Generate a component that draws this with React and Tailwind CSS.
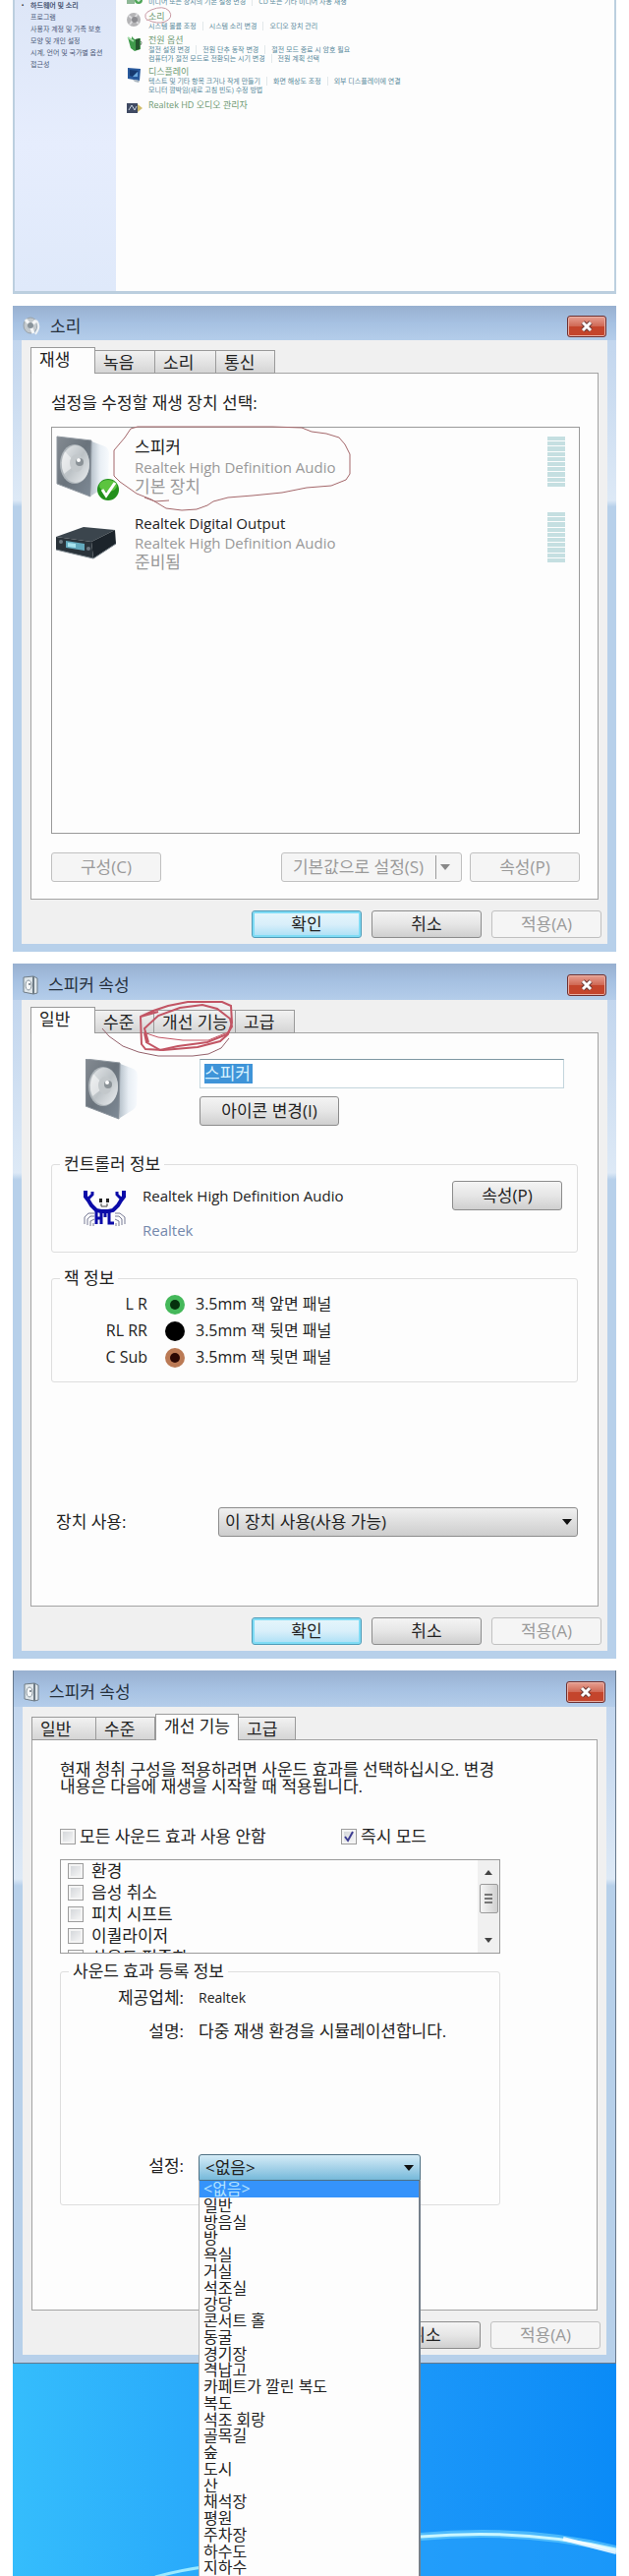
import React, { useState } from 'react';

const presets = [
  '일반', '방음실', '방', '욕실', '거실', '석조실', '강당', '콘서트 홀', '동굴', '경기장', '격납고',
  '카페트가 깔린 복도', '복도', '석조 회랑', '골목길', '숲', '도시', '산', '채석장', '평원', '주차장',
  '하수도', '지하수',
];

const sidebarLinks = [
  '하드웨어 및 소리', '프로그램', '사용자 계정 및 가족 보호', '모양 및 개인 설정',
  '시계, 언어 및 국가별 옵션', '접근성',
];

const Button = ({ children, variant = 'normal', className = '' }) => {
  const styles = {
    normal: 'border-[#8c8c8c] bg-linear-to-b from-[#f4f4f4] via-[#e6e6e6] to-[#cfcfcf] text-[#222]',
    primary:
      'border-[#4f9cb8] bg-linear-to-b from-[#e6f6fb] via-[#d9effa] to-[#a9dff5] text-[#222] shadow-[inset_0_0_0_2px_#7fdcf5]',
    disabled: 'border-[#c0c0c0] bg-[#f5f5f5] text-[#9a9a9a]',
  };
  return (
    <button
      type="button"
      disabled={variant === 'disabled'}
      className={`flex items-center justify-center rounded-[3px] border text-[17px] leading-6 ${styles[variant]} ${className}`}
    >
      {children}
    </button>
  );
};

const SpeakerArt = () => (
  <>
    <path d="M30 3 L46 9 Q53 11 53 17 L52 47 Q51 50 48 52 L35 60 Z" fill="url(#side)" />
    <path d="M0 0 L35 4 L34 61 L0 48 Z" fill="url(#face)" stroke="#8f979f" strokeWidth="1" />
    <ellipse cx="18" cy="28" rx="15" ry="20" fill="#aeb5ba" />
    <ellipse cx="19" cy="28" rx="14" ry="19" fill="url(#cone)" />
    <path d="M20 28 L8 15 A14 19 0 0 0 7 38 Z" fill="#fff" opacity=".5" />
    <ellipse cx="20" cy="27" rx="7" ry="9" fill="#c3c8cb" />
    <circle cx="23" cy="26" r="4" fill="#8b9297" />
    <circle cx="22" cy="24" r="2" fill="#fff" />
    <defs>
      <linearGradient id="side">
        <stop offset="0" stopColor="#9eabb6" />
        <stop offset=".6" stopColor="#e8eef4" />
        <stop offset="1" stopColor="#f7fafd" />
      </linearGradient>
      <linearGradient id="face" x2="1" y2="1">
        <stop offset="0" stopColor="#848b92" />
        <stop offset=".5" stopColor="#6a737c" />
        <stop offset="1" stopColor="#7f8b97" />
      </linearGradient>
      <linearGradient id="cone" x2="1" y2="1">
        <stop offset="0" stopColor="#e6e9eb" />
        <stop offset=".5" stopColor="#bcc2c6" />
        <stop offset="1" stopColor="#eceff1" />
      </linearGradient>
    </defs>
  </>
);

const SpeakerIcon = () => (
  <svg className="h-[62px] w-[54px] shrink-0" viewBox="0 0 54 62">
    <SpeakerArt />
  </svg>
);

const DefaultSpeakerIcon = () => (
  <svg className="h-[62px] w-[62px] shrink-0 overflow-visible" viewBox="0 0 62 62">
    <g transform="translate(1 0)">
      <SpeakerArt />
    </g>
    <circle cx="53" cy="54" r="11" fill="#23901c" />
    <ellipse cx="53" cy="50" rx="9" ry="6" fill="#5cc43f" />
    <path d="M47 54 L51 60 L60 47" fill="none" stroke="#fff" strokeWidth="3" />
  </svg>
);

const ReceiverIcon = () => (
  <svg className="h-[62px] w-[62px] shrink-0" viewBox="0 0 62 62">
    <path d="M0 25 L28 15 L60 18 L36 30 Z" fill="#3b454d" />
    <path d="M36 30 L60 18 L61 32 L38 47 Z" fill="#1c242b" />
    <path d="M0 25 L36 30 L38 47 L0 38 Z" fill="#2a333a" />
    <path d="M10 29 L29 32 L29 39 L10 36 Z" fill="#63a9bd" />
    <path d="M12 31 L20 32 L20 36 L12 35 Z" fill="#a8e3ee" />
    <circle cx="5" cy="30" r="2" fill="#717c84" />
    <circle cx="33" cy="37" r="2" fill="#6d7880" />
    <path d="M0 38 L38 47 L61 32" fill="none" stroke="#7a848b" />
  </svg>
);

const CrabIcon = () => (
  <svg className="h-9 w-[43px] shrink-0" viewBox="0 0 43 36">
    <g fill="none" stroke="#777a95">
      <path d="M11 23 H5 L1 27 V34 M11 26 H7 L4 29 V35 M11 29 L7 31 V36 M10 33 V36" />
      <path d="M32 23 H37 L42 27 V34 M32 26 H36 L39 29 V35 M32 29 L36 31 V36 M33 33 V36" />
    </g>
    <g fill="none" stroke="#0b0ba8">
      <path d="M2 0 V6 L5 10 L8 15 L13 20 L18 21 H25 L30 20 L35 15 L38 10 L41 6 V0" strokeWidth="4" />
      <path d="M9 1 V4 L5 8 M34 1 V4 L38 8" strokeWidth="3" />
      <path d="M13 21 V34 M18 21 V34 M13 28 H18 M22 21 V27 M26 21 V33 H31" strokeWidth="3" />
    </g>
    <path d="M16 8 h3 v4 h-3 Z M23 8 h3 v4 h-3 Z" fill="#222" />
    <path d="M18 13 V16 H24 V13" fill="none" stroke="#444" />
  </svg>
);

const TitleSpeaker = () => (
  <svg className="h-5 w-4 shrink-0" viewBox="0 0 16 20">
    <path d="M1 2 L11 1 L15 3 V18 L11 19 L1 17 Z" fill="#dfe6ea" stroke="#6f7c86" />
    <path d="M11 1 V19" stroke="#6f7c86" strokeWidth="2" />
    <ellipse cx="6" cy="10" rx="3" ry="5" fill="#f6f8f9" stroke="#8d99a2" />
    <circle cx="7" cy="9" r="1" fill="#66727b" />
  </svg>
);

const TitleSound = () => (
  <svg className="h-5 w-[18px] shrink-0" viewBox="0 0 18 20">
    <ellipse cx="8" cy="9" rx="7" ry="8" fill="#c3c9cd" stroke="#98a2aa" />
    <path d="M8 9 L3 3 M8 9 L14 4 M8 9 L11 17" stroke="#f5f7f8" strokeWidth="3" />
    <circle cx="8" cy="9" r="3" fill="#89939a" />
    <path d="M14 4 Q19 10 13 18" fill="none" stroke="#eef1f3" strokeWidth="2" />
  </svg>
);

const Dialog = ({ title, icon, titleClass, frameClass, tabs, scribble, children }) => (
  <section
    className={`border-t bg-linear-to-b from-[#bdd2ec] via-[#dde9f6] via-30% to-[#b7d0ea] to-31% px-[9px] pb-2 ${frameClass}`}
  >
    <header
      className={`-mx-[9px] -mt-px flex items-center gap-2.5 bg-linear-to-b from-[#98b0d0] via-[#a6c1e2] to-[#b4cdea] pr-2.5 pl-2.5 pt-1.5 ${titleClass}`}
    >
      {icon}
      <h2 className="flex-1 text-[17px] leading-6 text-[#27313d]">{title}</h2>
      <button
        type="button"
        aria-label="닫기"
        className="flex h-[22px] w-10 items-center justify-center rounded-[3px] border border-[#6e3030] bg-linear-to-b from-[#e6a093] via-[#cf6753] via-50% to-[#c4452c] to-51% shadow-[inset_0_0_0_1px_#e9b0a5]"
      >
        <svg className="h-3 w-3.5" viewBox="0 0 14 12">
          <path d="M3 2 L11 10 M11 2 L3 10" stroke="#6b3a36" strokeWidth="5" />
          <path d="M3 2 L11 10 M11 2 L3 10" stroke="#fff" strokeWidth="3" />
        </svg>
      </button>
    </header>
    <div className="bg-[#f0f0f0] px-[9px] pt-[7px] pb-1.5">
      <div role="tablist" className="relative -mb-px flex h-[27px] items-end">
        {tabs.map(([name, width, active]) => (
          <button
            key={name}
            type="button"
            role="tab"
            aria-selected={Boolean(active)}
            className={`flex border border-[#9a9a9a] pl-2 text-[17px] leading-6 text-[#222] ${width} ${
              active
                ? 'h-[27px] border-b-0 bg-[#fdfdfd]'
                : 'h-6 border-l-0 bg-linear-to-b from-[#f2f2f2] to-[#d5d5d5] first:border-l'
            }`}
          >
            {name}
          </button>
        ))}
        {scribble}
      </div>
      <div className="border border-[#a3a3a3] bg-[#fdfdfd]">{children}</div>
      <div className="-mr-[3px] mt-[11px] flex justify-end gap-2.5">
        <Button variant="primary" className="h-7 w-28">확인</Button>
        <Button className="h-7 w-28">취소</Button>
        <Button variant="disabled" className="h-7 w-28">적용(A)</Button>
      </div>
    </div>
  </section>
);

const Group = ({ legend, className = '', children }) => (
  <fieldset className={`rounded-[3px] border border-[#dedede] ${className}`}>
    <legend className="ml-2 px-1 text-[17px] leading-6 text-[#222]">{legend}</legend>
    {children}
  </fieldset>
);

const Check = ({ label, checked, onChange, className = '' }) => (
  <label className={`flex items-center text-[17px] leading-[22px] text-[#222] ${className}`}>
    <span className="relative flex">
      <input
        type="checkbox"
        checked={checked}
        onChange={onChange}
        className="h-4 w-4 appearance-none border border-[#9d9d9d] bg-linear-to-br from-[#cfd2d6] to-[#fafafa] shadow-[inset_0_0_0_2px_#f4f4f4]"
      />
      {checked && (
        <svg className="pointer-events-none absolute inset-0 h-4 w-4" viewBox="0 0 16 16">
          <path d="M4 8 L7 12 L12 3" fill="none" stroke="#3d3d92" strokeWidth="2" />
        </svg>
      )}
    </span>
    {label}
  </label>
);

const Device = ({ icon, name, status, children }) => (
  <li className="relative flex h-[62px] items-start">
    {icon}
    <div className="ml-[18px] flex-1 pt-px leading-5 text-[#999]">
      <p className="text-[15px] leading-5 text-[#222]">{name}</p>
      <p className="text-[15px] leading-5">Realtek High Definition Audio</p>
      <p className="text-[17px] leading-5">{status}</p>
    </div>
    <div className="flex h-[51px] w-[18px] flex-col gap-px">
      {Array.from({ length: 10 }, (_, i) => (
        <span key={i} className="flex-1 bg-[#c5dfe1]" />
      ))}
    </div>
    {children}
  </li>
);

const Category = ({ icon, title, rows, className }) => (
  <div className={`flex gap-1.5 ${className}`}>
    <svg className="h-[18px] w-4 shrink-0" viewBox="0 0 16 18">
      {icon}
    </svg>
    <div>
      {title && (
        <a href="#" className="block text-[9px] leading-[11px] text-[#6f9a73]">{title}</a>
      )}
      {rows.map((row) => (
        <p key={row[0]} className="flex text-[7px] leading-[9px] text-[#5a8a9c]">
          {row.map((link, i) => (
            <a key={link} href="#" className={i ? 'ml-1.5 border-l border-[#e2e8ea] pl-1.5' : ''}>
              {link}
            </a>
          ))}
        </p>
      ))}
    </div>
  </div>
);

const ControlPanel = () => (
  <section className="flex h-[299px] border-x-2 border-b-3 border-[#bccfdf] bg-[#fdfdfd]">
    <nav className="w-[103px] shrink-0 bg-linear-to-b from-[#dde6f7] via-[#e6edfd] to-[#dfe9fa]">
      <ul className="text-[7px] leading-3 text-[#4d5a78]">
        {sidebarLinks.map((item, i) => (
          <li key={item} className="flex">
            <span className="w-4 text-center text-[#333]">{i === 0 ? '•' : ''}</span>
            <a href="#" className={i === 0 ? 'font-bold' : ''}>{item}</a>
          </li>
        ))}
      </ul>
    </nav>
    <div className="relative flex-1 pl-[11px]">
      <Category
        className="-mt-3 items-end"
        rows={[['미디어 또는 장치의 기본 설정 변경', 'CD 또는 기타 미디어 자동 재생']]}
        icon={
          <>
            <path d="M0 7 h8 v9 h-8 Z" fill="#8fb896" />
            <circle cx="12" cy="12" r="4" fill="#4fa658" />
            <path d="M10 12 h4 M12 10 v4" stroke="#fff" />
          </>
        }
      />
      <Category
        className="mt-[5px]"
        title="소리"
        rows={[['시스템 볼륨 조정', '시스템 소리 변경', '오디오 장치 관리']]}
        icon={
          <>
            <ellipse cx="7" cy="9" rx="7" ry="7" fill="#b4b4b6" />
            <path d="M2 5 L12 13 M11 3 L3 14" stroke="#dcdcde" strokeWidth="2" />
            <circle cx="8" cy="9" r="3" fill="#8c8c90" />
          </>
        }
      />
      <Category
        className="mt-1"
        title="전원 옵션"
        rows={[
          ['절전 설정 변경', '전원 단추 동작 변경', '절전 모드 종료 시 암호 필요'],
          ['컴퓨터가 절전 모드로 전환되는 시기 변경', '전원 계획 선택'],
        ]}
        icon={
          <>
            <path d="M1 3 L5 5 V2 L8 5 L14 4 V15 L8 17 L4 14 Z" fill="#3f9a4b" />
            <path d="M9 5 L13 4 V15 L9 16 Z" fill="#25552e" />
            <path d="M13 6 Q17 8 13 12" fill="none" stroke="#697c6c" />
            <path d="M1 3 L7 7" stroke="#a4dba8" strokeWidth="2" />
          </>
        }
      />
      <Category
        className="mt-[3px]"
        title="디스플레이"
        rows={[
          ['텍스트 및 기타 항목 크거나 작게 만들기', '화면 해상도 조정', '외부 디스플레이에 연결'],
          ['모니터 깜박임(새로 고침 빈도) 수정 방법'],
        ]}
        icon={
          <>
            <path d="M1 2 L14 3 L13 15 L1 13 Z" fill="#28599c" />
            <path d="M3 4 L12 5 L6 11 L3 10 Z" fill="#16396f" />
            <path d="M6 11 L11 6 L11 11 Z" fill="#6ca9dd" />
            <path d="M6 14 L13 15 L12 17 L8 16 Z" fill="#a9b5bf" />
          </>
        }
      />
      <Category
        className="mt-[5px]"
        title="Realtek HD 오디오 관리자"
        rows={[]}
        icon={
          <>
            <path d="M0 4 H11 V14 H0 Z" fill="#3f4a63" />
            <path d="M2 11 L5 6 L8 11 L10 7" fill="none" stroke="#c9d4e0" />
            <path d="M11 5 L16 9 L11 13 Z" fill="#d2bd6c" />
          </>
        }
      />
      <svg className="absolute top-1.5 left-7 h-5 w-[30px]" viewBox="0 0 30 20">
        <path
          d="M4 15 Q-2 8 8 4 Q20 -1 26 5 Q31 12 22 16 Q14 19 4 14"
          fill="none"
          stroke="#c99aa4"
        />
      </svg>
    </div>
  </section>
);

const SoundDialog = () => (
  <Dialog
    title="소리"
    icon={<TitleSound />}
    titleClass="h-[35px]"
    frameClass="border-[#8398b3]"
    tabs={[
      ['재생', 'w-[66px]', true],
      ['녹음', 'w-[61px]'],
      ['소리', 'w-[62px]'],
      ['통신', 'w-[60px]'],
    ]}
  >
    <div className="pt-[18px] pr-[18px] pb-[17px] pl-5">
      <p className="text-[17px] leading-6 text-[#222]">설정을 수정할 재생 장치 선택:</p>
      <ul className="mt-3 flex min-h-[414px] flex-col gap-[15px] border border-[#9a9a9a] bg-[#fdfdfd] pt-[9px] pr-3.5 pl-1">
        <Device icon={<DefaultSpeakerIcon />} name={<span className="text-[17px]">스피커</span>} status="기본 장치">
          <svg
            className="absolute top-0 left-0 h-[62px] w-[300px] overflow-visible"
            viewBox="0 0 300 62"
            fill="none"
            stroke="#a4676a"
          >
            <path d="M83 -10 L76 -8 L70 1 L59 14 V40 L65 46 L82 58 L97 64 L112 73 L128 75 L143 74 L154 70 L160 66 L175 62 L200 60 L230 57 L255 52 L280 50 L295 44 L299 38 V18 L294 8 L288 1 L275 -3 L260 -5 L250 -9 L220 -10 H83" />
            <path d="M90 62 L101 66 L115 65" />
          </svg>
        </Device>
        <Device icon={<ReceiverIcon />} name="Realtek Digital Output" status="준비됨" />
      </ul>
      <div className="mt-[19px] flex gap-2">
        <Button variant="disabled" className="h-[30px] w-28">구성(C)</Button>
        <Button variant="disabled" className="ml-auto h-[30px] w-[184px] gap-3">
          기본값으로 설정(S)
          <span className="flex h-6 items-center border-l border-[#9a9a9a] pl-1">
            <svg className="h-1.5 w-2.5" viewBox="0 0 10 6">
              <path d="M0 0 H10 L5 6 Z" fill="#888" />
            </svg>
          </span>
        </Button>
        <Button variant="disabled" className="h-[30px] w-28">속성(P)</Button>
      </div>
    </div>
  </Dialog>
);

const jacks = [
  { id: 'L R', ring: 'bg-[#45b85a]', hole: 'bg-[#06300d]', text: '3.5mm 잭 앞면 패널' },
  { id: 'RL RR', ring: 'bg-black', hole: 'bg-black', text: '3.5mm 잭 뒷면 패널' },
  { id: 'C Sub', ring: 'bg-[#bb7a55]', hole: 'bg-[#2b0804]', text: '3.5mm 잭 뒷면 패널' },
];

const GeneralDialog = () => (
  <Dialog
    title="스피커 속성"
    icon={<TitleSpeaker />}
    titleClass="h-[37px]"
    frameClass="border-[#8398b3]"
    tabs={[
      ['일반', 'w-[66px]', true],
      ['수준', 'w-[60px]'],
      ['개선 기능', 'w-[83px]'],
      ['고급', 'w-[60px]'],
    ]}
    scribble={
      <svg
        className="pointer-events-none absolute top-0 left-0 h-[54px] w-[220px] overflow-visible"
        viewBox="0 0 220 54"
        fill="none"
        stroke="#c25564"
        strokeWidth="2"
      >
        <path d="M112 10 L125 4 L140 -1 L160 -5 H195 L204 -1 L205 16 L201 28 L193 35 L170 41 L135 44 L117 43 L113 38 L112 10 L130 5" />
        <path d="M120 36 L116 22 L130 9 L152 1 L175 -2 L190 2 L203 12 L205 20 L200 28 L180 36 L150 40 L132 44 L118 36 L116 27" />
        <path d="M115 26 L130 31 L155 34 H181 L203 25" strokeWidth="1" />
        <path d="M73 22 L80 30 L94 40 L110 46 L130 50 H165 L181 48 L194 42 L202 32" stroke="#95626c" strokeWidth="1" />
      </svg>
    }
  >
    <div className="pt-[26px] pr-5 pb-[70px] pl-5 text-[#222]">
      <div className="flex pr-3.5 pl-[35px]">
        <SpeakerIcon />
        <div className="ml-[62px] flex flex-1 flex-col items-start gap-2">
          {/* name is shown selected, ready to be typed over */}
          <div className="grid h-[30px] w-full items-center border border-[#c3d5dc] border-t-[#7f98a3] bg-white">
            <input
              aria-label="장치 이름"
              defaultValue="스피커"
              className="ml-1 w-[49px] bg-[#3f94d8] text-[17px] leading-5 text-[#d9f2ff] outline-none"
            />
          </div>
          <Button className="h-[30px] w-[142px]">아이콘 변경(I)</Button>
        </div>
      </div>
      <Group legend="컨트롤러 정보" className="mt-[27px]">
        <div className="flex items-start pt-[5px] pr-[15px] pb-[42px] pl-8">
          <div className="mt-2.5 h-5">
            <CrabIcon />
          </div>
          <div className="ml-[17px] h-5 flex-1 pt-[5px] text-[15px] leading-5">
            <p>Realtek High Definition Audio</p>
            <a href="#" className="mt-[15px] block text-[#7488ac]">Realtek</a>
          </div>
          <Button className="h-[30px] w-28">속성(P)</Button>
        </div>
      </Group>
      <Group legend="잭 정보" className="mt-3.5">
        <ul className="pt-px pb-[11px] text-[16px] leading-[27px]">
          {jacks.map((jack) => (
            <li key={jack.id} className="flex items-center">
              <span className="w-[97px] text-right">{jack.id}</span>
              <span className={`ml-[18px] flex h-5 w-5 items-center justify-center rounded-full ${jack.ring}`}>
                <span className={`h-2.5 w-2.5 rounded-full ${jack.hole}`} />
              </span>
              <span className="ml-[11px]">{jack.text}</span>
            </li>
          ))}
        </ul>
      </Group>
      <div className="mt-[127px] flex items-center pl-[5px]">
        <label htmlFor="usage" className="w-[165px] text-[17px] leading-6">장치 사용:</label>
        <div className="relative flex-1">
          <select
            id="usage"
            className="h-[30px] w-full appearance-none rounded-[3px] border border-[#8c8c8c] bg-linear-to-b from-[#f0f0f0] to-[#cdcdcd] pl-1.5 text-[17px] text-[#222]"
          >
            <option>이 장치 사용(사용 가능)</option>
            <option>이 장치 사용 안 함(사용 안 함)</option>
          </select>
          <svg className="pointer-events-none absolute top-3 right-1.5 h-1.5 w-2.5" viewBox="0 0 10 6">
            <path d="M0 0 H10 L5 6 Z" fill="#111" />
          </svg>
        </div>
      </div>
    </div>
  </Dialog>
);

const EnhancementsDialog = () => {
  const [effects, setEffects] = useState({
    환경: false,
    '음성 취소': false,
    '피치 시프트': false,
    이퀄라이저: false,
    '사운드 평준화': false,
  });
  const [disableAll, setDisableAll] = useState(false);
  const [immediate, setImmediate] = useState(true);
  const [preset, setPreset] = useState('<없음>');

  return (
    <Dialog
      title="스피커 속성"
      icon={<TitleSpeaker />}
      titleClass="h-[37px]"
      frameClass="border-x border-b border-[#66788c]"
      tabs={[
        ['일반', 'w-[66px]'],
        ['수준', 'w-[60px]'],
        ['개선 기능', 'w-[85px]', true],
        ['고급', 'w-[58px]'],
      ]}
    >
      <div className="pt-[21px] pb-[106px] pl-7 text-[17px] text-[#222]">
        <p className="leading-[17px]">
          현재 청취 구성을 적용하려면 사운드 효과를 선택하십시오. 변경
          <br />
          내용은 다음에 재생을 시작할 때 적용됩니다.
        </p>
        <div className="mt-8 flex">
          <Check
            className="w-[286px] gap-1"
            label="모든 사운드 효과 사용 안함"
            checked={disableAll}
            onChange={() => setDisableAll(!disableAll)}
          />
          <Check
            className="gap-1"
            label="즉시 모드"
            checked={immediate}
            onChange={() => setImmediate(!immediate)}
          />
        </div>
        <div className="mt-3 mr-[98px] flex h-24 justify-between overflow-hidden border border-[#9a9a9a] bg-[#fdfdfd]">
          <ul className="pl-[7px]">
            {Object.keys(effects).map((name) => (
              <li key={name}>
                <Check
                  className="gap-2"
                  label={name}
                  checked={effects[name]}
                  onChange={() => setEffects({ ...effects, [name]: !effects[name] })}
                />
              </li>
            ))}
          </ul>
          <div className="flex w-[22px] flex-col items-center bg-[#f0f0f0] py-2.5">
            <svg className="h-[5px] w-2" viewBox="0 0 8 5">
              <path d="M0 5 L4 0 L8 5 Z" fill="#444" />
            </svg>
            <div className="mt-[9px] mb-auto flex h-[30px] w-[19px] flex-col items-center justify-center gap-0.5 rounded-[2px] border border-[#9a9a9a] bg-linear-to-r from-[#f5f5f5] to-[#d0d0d0]">
              <span className="h-0.5 w-2 bg-[#777]" />
              <span className="h-0.5 w-2 bg-[#777]" />
              <span className="h-0.5 w-2 bg-[#777]" />
            </div>
            <svg className="h-[5px] w-2" viewBox="0 0 8 5">
              <path d="M0 0 L4 5 L8 0 Z" fill="#444" />
            </svg>
          </div>
        </div>
        <Group legend="사운드 효과 등록 정보" className="mt-1.5 mr-[98px]">
          <div className="grid grid-cols-[125px_1fr] gap-x-[15px] pt-[3px] pb-6 leading-6">
            <span className="text-right">제공업체:</span>
            <span className="text-[14px]">Realtek</span>
            <span className="mt-2.5 text-right">설명:</span>
            <span className="mt-2.5">다중 재생 환경을 시뮬레이션합니다.</span>
            <span className="mt-[113px] text-right">설정:</span>
            <div className="relative mt-[113px] mr-20">
              <button
                type="button"
                aria-haspopup="listbox"
                aria-expanded="true"
                className="flex h-[27px] w-full items-center justify-between rounded-t-[3px] border border-[#4f7184] bg-linear-to-b from-[#d5ecf7] to-[#76b9da] pr-1.5 pl-1.5"
              >
                {preset}
                <svg className="h-1.5 w-2.5" viewBox="0 0 10 6">
                  <path d="M0 0 H10 L5 6 Z" fill="#111" />
                </svg>
              </button>
              <ul
                role="listbox"
                aria-label="설정"
                className="absolute inset-x-0 top-full z-10 grid h-[402px] auto-rows-fr border-r-2 border-l border-r-[#75808c] border-l-[#b5b5b5] bg-[#fdfdfd] text-[16px] leading-4"
              >
                {['<없음>', ...presets].map((name) => (
                  <li
                    key={name}
                    role="option"
                    aria-selected={preset === name}
                    onClick={() => setPreset(name)}
                    className={`pl-1 ${preset === name ? 'bg-[#3593fb] text-[#b5e4ff]' : ''}`}
                  >
                    {name}
                  </li>
                ))}
              </ul>
            </div>
          </div>
        </Group>
      </div>
    </Dialog>
  );
};

const Wallpaper = () => (
  <div className="h-[217px] bg-linear-to-r from-[#35bdfc] via-[#229dfa] to-[#0a8bf7]">
    <svg className="h-full w-full" viewBox="0 0 614 217" preserveAspectRatio="none" fill="none">
      <path d="M415 175 Q520 168 614 190 V217 H415 Z" fill="#2aa4fb" opacity=".5" />
      <path d="M415 176 Q520 166 614 189" stroke="#6fd3ff" strokeWidth="8" opacity=".6" />
      <path d="M415 176 Q520 167 614 189" stroke="#c9f6ff" strokeWidth="3" />
      <path d="M560 178 L614 192" stroke="#fff" strokeWidth="4" opacity=".8" />
      <path d="M145 217 Q170 210 200 206" stroke="#9be9ff" strokeWidth="3" />
    </svg>
  </div>
);

export default function App() {
  return (
    <main className="flex flex-col gap-3 overflow-hidden bg-white px-[13px] font-['Open_Sans','Noto_Sans_CJK_KR',sans-serif]">
      <ControlPanel />
      <SoundDialog />
      <GeneralDialog />
      <div>
        <EnhancementsDialog />
        <Wallpaper />
      </div>
    </main>
  );
}
